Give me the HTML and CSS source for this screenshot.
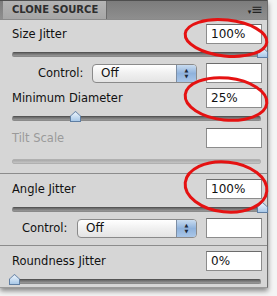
FILE: index.html
```html
<html>
    <head>
        <title>Clone Source</title>
        <link rel="stylesheet" href="styles.css">
    </head>
    <body>
        <div class="panel">
            <div class="header">
                <div class="tab">CLONE SOURCE</div>
                <div class="menu">&#9662;<span class="bars">&#8801;</span></div>
            </div>

            <div class="row">
                <span class="label">Size Jitter</span>
                <div class="field">100%</div>
            </div>
            <div class="slider"><div class="thumb" style="left: 244px"></div></div>

            <div class="row control-row">
                <span class="label control-label">Control:</span>
                <div class="select short"><span>Off</span><div class="stepper"><span>&#9650;</span><span>&#9660;</span></div></div>
                <div class="field"></div>
            </div>

            <div class="row">
                <span class="label">Minimum Diameter</span>
                <div class="field">25%</div>
            </div>
            <div class="slider"><div class="thumb" style="left: 57px"></div></div>

            <div class="row">
                <span class="label disabled">Tilt Scale</span>
                <div class="field"></div>
            </div>
            <div class="slider off"></div>

            <div class="divider first"></div>

            <div class="row">
                <span class="label">Angle Jitter</span>
                <div class="field">100%</div>
            </div>
            <div class="slider"><div class="thumb" style="left: 244px"></div></div>

            <div class="row control-row">
                <span class="label control-label wide">Control:</span>
                <div class="select"><span>Off</span><div class="stepper"><span>&#9650;</span><span>&#9660;</span></div></div>
                <div class="field"></div>
            </div>

            <div class="divider"></div>

            <div class="row">
                <span class="label">Roundness Jitter</span>
                <div class="field">0%</div>
            </div>
            <div class="slider"><div class="thumb" style="left: -4px"></div></div>
        </div>

        <!-- red circles drawn over the values -->
        <svg class="marks" width="277" height="296">
            <ellipse cx="226" cy="38" rx="41" ry="18" transform="rotate(6 226 38)"></ellipse>
            <ellipse cx="226" cy="99" rx="41" ry="21" transform="rotate(6 226 99)"></ellipse>
            <ellipse cx="226" cy="187" rx="41" ry="25" transform="rotate(6 226 187)"></ellipse>
        </svg>
    </body>
</html>
```

FILE: styles.css
```css
body{
    margin: 0;
    background-color: #f4f4f4;
    font-family: "DejaVu Sans", sans-serif;
    font-size: 11.5px;
    color: #111;
    position: relative;
    width: 277px;
    height: 296px;
    overflow: hidden;
}

.panel{
    width: 267px;
    height: 287px;
    background-color: #d6d6d6;
    border-right: 1px solid #6e6e6e;
    border-bottom: 1px solid #9a9a9a;
    box-shadow: 0px 3px 5px rgba(0, 0, 0, 0.45);
}

.header{
    height: 20px;
    display: flex;
    align-items: flex-end;
    background: linear-gradient(#7c7c7c, #8e8e8e);
    border-top: 1px solid #4e4e4e;
    box-sizing: border-box;
    border-bottom: 1px solid #8a8a8a;
}

.tab{
    height: 18px;
    margin-left: 3px;
    padding: 0px 8px 0px 9px;
    background: linear-gradient(#b4b4b4, #a6a6a6);
    border-right: 1px solid #6a6a6a;
    font-size: 10px;
    font-weight: bold;
    color: #2e2e2e;
    line-height: 18px;
}

.menu{
    margin-left: auto;
    margin-right: 4px;
    align-self: center;
    font-size: 7px;
    color: #222;
}

.menu .bars{
    font-size: 14px;
    line-height: 10px;
}

.row{
    height: 24px;
    display: flex;
    align-items: center;
    padding-left: 12px;
    margin-top: 2px;
}

.label{
    flex: 1;
}

.disabled{
    color: #9a9a9a;
}

.field{
    width: 56px;
    height: 20px;
    margin-right: 5px;
    background-color: #fff;
    border: 1px solid #8c8c8c;
    border-top-color: #6c6c6c;
    font-size: 12px;
    line-height: 18px;
    padding-left: 4px;
    box-sizing: border-box;
}

.control-row{
    height: 22px;
    margin-top: 1px;
}

.control-label{
    flex: none;
    margin-left: 26px;
    width: 54px;
}

.control-label.wide{
    margin-left: 10px;
    width: 55px;
}

.select{
    flex: 1;
    height: 19px;
    margin-right: 9px;
    display: flex;
    align-items: center;
    border: 1px solid #8a8a8a;
    border-radius: 4px;
    background: linear-gradient(#ffffff, #f0f0f0 50%, #e4e4e4);
    box-sizing: border-box;
    overflow: hidden;
    font-size: 12px;
}

.select span{
    padding-left: 8px;
    flex: 1;
}

.stepper{
    flex: none;
    width: 19px;
    height: 100%;
    display: flex;
    flex-direction: column;
    align-items: center;
    justify-content: center;
    background: linear-gradient(#c9dcf0, #8fb2dc 50%, #a9c6e8);
    border-left: 1px solid #7d8ea4;
}

.stepper span{
    padding: 0px;
    flex: none;
    font-size: 5px;
    line-height: 6px;
    color: #1d2a3a;
}

.slider{
    position: relative;
    height: 3px;
    margin: 6px 6px 5px 12px;
    border-radius: 2px;
    background: linear-gradient(#666666, #9a9a9a);
    border: 1px solid #8a8a8a;
    border-top-color: #555555;
}

.slider.off{
    background: linear-gradient(#a8a8a8, #c4c4c4);
    border-color: #b0b0b0;
    margin-top: 9px;
}

.thumb{
    position: absolute;
    top: -6px;
    width: 11px;
    height: 11px;
    background-color: #5f7ea3;
    clip-path: polygon(50% 0%, 100% 45%, 100% 100%, 0% 100%, 0% 45%);
}

.thumb::before{
    content: "";
    position: absolute;
    left: 1px;
    top: 1px;
    width: 9px;
    height: 9px;
    background: linear-gradient(#eef5fc, #a8c8e8);
    clip-path: polygon(50% 0%, 100% 45%, 100% 100%, 0% 100%, 0% 45%);
}

.divider{
    height: 1px;
    background-color: #8c8c8c;
    margin: 6px 0px 3px 0px;
}

.divider.first{
    margin-top: 9px;
}

.marks{
    position: absolute;
    left: 0px;
    top: 0px;
}

.marks ellipse{
    fill: none;
    stroke: #e51212;
    stroke-width: 3;
}
```
